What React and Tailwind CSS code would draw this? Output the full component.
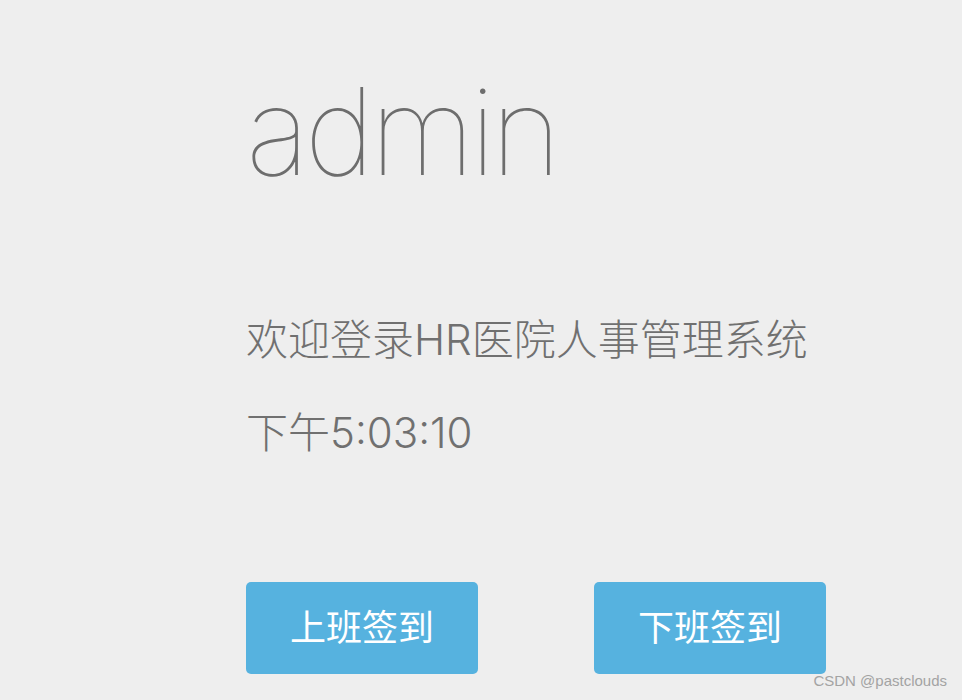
export default function App() {
  return (
    <div className="relative h-[700px] w-[962px] overflow-hidden bg-[#eeeeee] font-['Inter','Noto_Sans_CJK_SC',sans-serif]">
      <div className="flex flex-col pl-[246px] pt-[66px]">
        {/* user name */}
        <h1 className="text-[121px] leading-[130px] font-thin tracking-[-5px] text-[#6d6d6d]">admin</h1>

        {/* greeting + clock */}
        <p className="mt-[119px] text-[42px] leading-[50px] font-light text-[#707070]">欢迎登录HR医院人事管理系统</p>
        <p className="mt-[43px] text-[42px] leading-[50px] font-light text-[#707070]">下午5:03:10</p>

        {/* sign in / sign out */}
        <div className="mt-[124px] flex gap-[116px]">
          <button className="h-[92px] w-[232px] rounded-[5px] bg-[#56b2df] text-[36px] font-normal text-white">上班签到</button>
          <button className="h-[92px] w-[232px] rounded-[5px] bg-[#56b2df] text-[36px] font-normal text-white">下班签到</button>
        </div>
      </div>

      <span className="absolute bottom-[8px] right-[15px] font-['Liberation_Sans',sans-serif] text-[15px] text-[#a3a3a3]">CSDN @pastclouds</span>
    </div>
  );
}
